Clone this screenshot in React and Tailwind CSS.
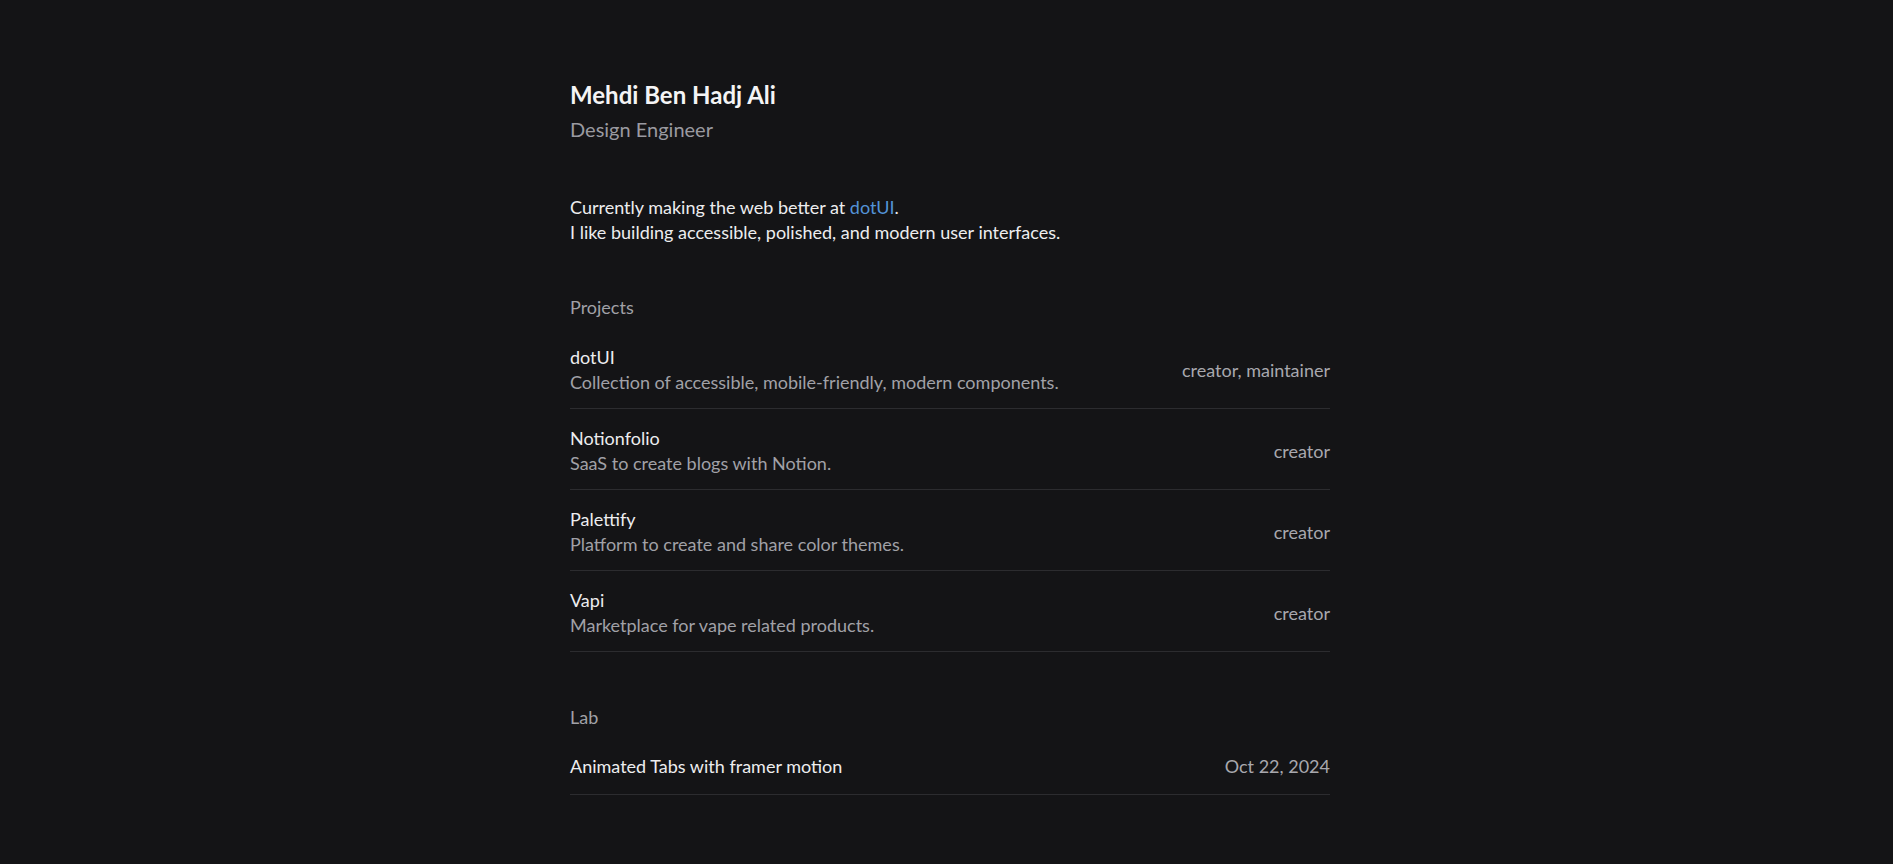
const projects = [
  { name: 'dotUI', description: 'Collection of accessible, mobile-friendly, modern components.', role: 'creator, maintainer' },
  { name: 'Notionfolio', description: 'SaaS to create blogs with Notion.', role: 'creator' },
  { name: 'Palettify', description: 'Platform to create and share color themes.', role: 'creator' },
  { name: 'Vapi', description: 'Marketplace for vape related products.', role: 'creator' },
];

const lab = [{ title: 'Animated Tabs with framer motion', date: 'Oct 22, 2024' }];

export default function App() {
  return (
    <div className="min-h-screen bg-[#141416] text-[#ededef] font-['Lato',sans-serif] flex justify-center pl-[7px]">
      <main className="w-[760px] pt-[79px]">
        {/* Header */}
        <h1 className="text-2xl font-bold leading-8 text-[#f4f4f5]">Mehdi Ben Hadj Ali</h1>
        <p className="mt-[2px] text-xl leading-8 text-[#9a9aa0]">Design Engineer</p>

        {/* Intro */}
        <div className="mt-[50px] text-lg leading-[25px] text-[#ededef]">
          <p>
            Currently making the web better at <a href="#" className="text-[#5393d6]">dotUI</a>.
          </p>
          <p>I like building accessible, polished, and modern user interfaces.</p>
        </div>

        {/* Projects */}
        <section className="mt-[50px]">
          <h2 className="text-lg leading-[25px] text-[#a1a1a7]">Projects</h2>
          <ul className="mt-[8px]">
            {projects.map((p) => (
              <li key={p.name} className="flex items-center justify-between border-b border-[#2c2c2f] pt-[17px] pb-[13px]">
                <div className="text-lg leading-[25px]">
                  <div className="text-[#ededef]">{p.name}</div>
                  <div className="text-[#a1a1a7]">{p.description}</div>
                </div>
                <span className="text-lg text-[#a8a8ae]">{p.role}</span>
              </li>
            ))}
          </ul>
        </section>

        {/* Lab */}
        <section className="mt-[53px]">
          <h2 className="text-lg leading-[25px] text-[#a1a1a7]">Lab</h2>
          <ul className="mt-[10px]">
            {lab.map((item) => (
              <li key={item.title} className="flex items-center justify-between border-b border-[#2c2c2f] pt-[14px] pb-[15px] text-lg leading-[25px]">
                <span className="text-[#ededef]">{item.title}</span>
                <span className="text-[#a8a8ae]">{item.date}</span>
              </li>
            ))}
          </ul>
        </section>
      </main>
    </div>
  );
}
